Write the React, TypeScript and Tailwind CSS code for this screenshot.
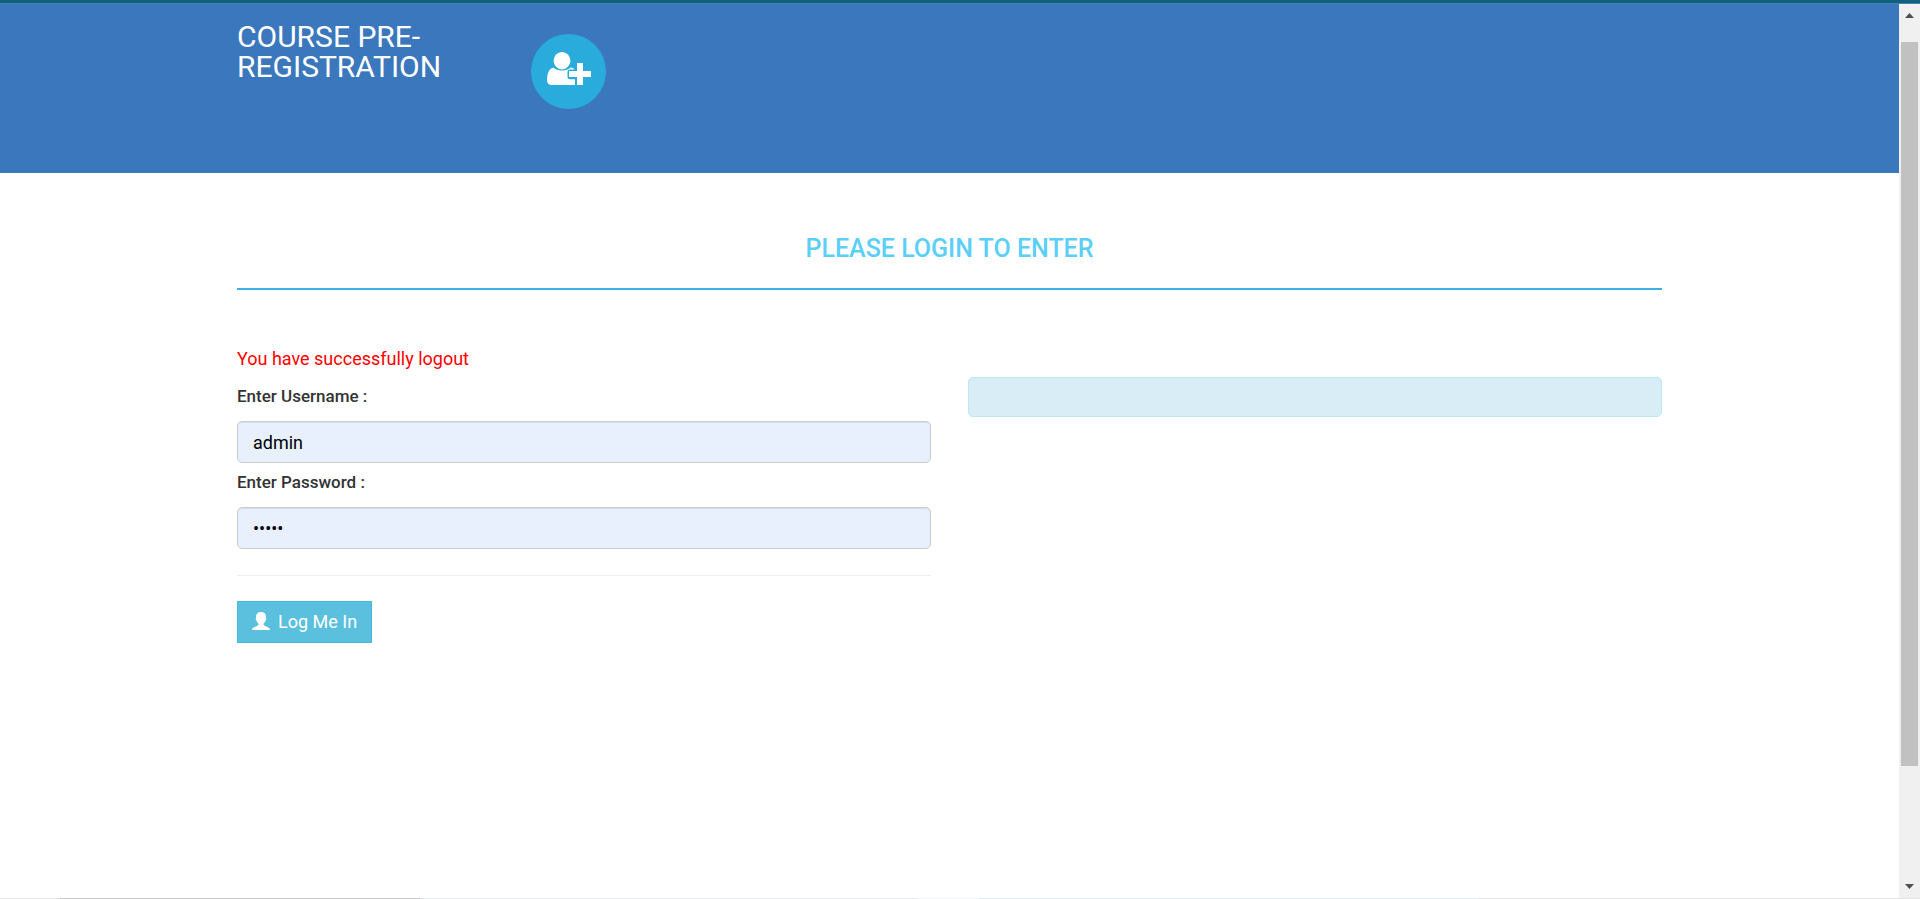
import React from "react";

function UserPlusIcon() {
  return (
    <svg viewBox="0 0 44 33" className="h-[33px] w-11" fill="#fff" aria-hidden="true">
      <ellipse cx="15" cy="8.7" rx="8.4" ry="8.7" />
      <path d="M6.2 15.6C8.4 17.6 11.400 18.600 15 18.600s6.600-1 8.800-3c1.600.3 2.900 1 3.800 2H23a2.500 2.500 0 0 0-2.500 2.500v4.700A2.500 2.500 0 0 0 23 27.300h5V33H4.800C1.700 33 0 31 0 28.200c0-6.200 1.800-11.400 6.200-12.600Z" />
      <path d="M30 11h6v8h8v6h-8v8h-6v-8h-8v-6h8Z" />
    </svg>
  );
}

function UserIcon() {
  return (
    <svg viewBox="0 0 18 18" className="h-[18px] w-[18px]" fill="#fff" aria-hidden="true">
      <path d="M9 0c3.200 0 5 1.900 5 4.800 0 .6-.1 1-.1 1.300.6.400.4 1.900-.4 2.500-.4 1.500-1.200 2.500-2 3.200v.8c0 .5.300.8.800 1l4 1.800c1.100.5 1.700 1.300 1.700 2.600H0c0-1.300.6-2.100 1.700-2.600l4-1.800c.5-.2.800-.5.800-1v-.8c-.8-.7-1.600-1.700-2-3.200-.8-.6-1-2.100-.4-2.500C4.100 5.800 4 5.400 4 4.800 4 1.900 5.800 0 9 0Z" />
    </svg>
  );
}

function Scrollbar() {
  return (
    <div className="flex w-[21px] shrink-0 flex-col items-center bg-[#f0f0f0]" aria-hidden="true">
      <div className="flex h-[38px] items-start pt-[9px]">
        <svg viewBox="0 0 9 5" className="h-[5px] w-[9px]" fill="#505050">
          <path d="M4.500 0 9 5H0Z" />
        </svg>
      </div>
      <div className="w-[17px] grow-[724] basis-0 bg-[#c1c1c1]" />
      <div className="flex grow-[132] basis-0 items-end">
        <svg viewBox="0 0 9 14" className="h-[14px] w-[9px]" fill="#505050">
          <path d="M0 0h9L4.500 5Z" />
        </svg>
      </div>
    </div>
  );
}

const fieldClass =
  "mt-[13px] block h-[42px] w-full rounded-[5px] border border-[#ccc] bg-[#e8f0fe] px-[15px] text-[18px] text-black shadow-[inset_0_1px_1px_rgba(0,0,0,0.075)] outline-none";
const labelClass = "block text-[17px] leading-6 font-medium text-[#333]";

export default function App() {
  return (
    <div className="flex min-h-screen flex-col bg-white font-['Roboto',sans-serif] text-[#333]">
      <div className="h-[3px] bg-[#10607f]" />
      <div className="h-px bg-[#3b87a8]" />
      <div className="flex grow">
        <div className="min-w-0 grow">
          <header className="h-[169px] bg-[#3b77bc]">
            <div className="mx-auto flex max-w-[1425px] items-start gap-[74px]">
              <a href="#" className="mt-[18px] w-[220px] text-[30px] leading-[30px] text-white">
                COURSE PRE-REGISTRATION
              </a>
              <div className="mt-[30px] flex h-[75px] w-[75px] items-center justify-center rounded-full bg-[#29abdc] pb-[6px]">
                <UserPlusIcon />
              </div>
            </div>
          </header>
          <main className="mx-auto max-w-[1425px] pt-[61px]">
            <h4 className="border-b-2 border-[#3db0e8] pb-6 text-center text-[25px] leading-[30px] font-medium text-[#5bcff7]">
              PLEASE LOGIN TO ENTER
            </h4>
            <div className="grid grid-cols-2 gap-[37px] pt-[57px]">
              <form onSubmit={(e) => e.preventDefault()}>
                <p className="text-[18px] leading-6 text-[#f00]">You have successfully logout</p>
                <label htmlFor="username" className={labelClass + " mt-[13px]"}>
                  Enter Username :
                </label>
                <input id="username" type="text" defaultValue="admin" className={fieldClass} />
                <label htmlFor="password" className={labelClass + " mt-[7px]"}>
                  Enter Password :
                </label>
                <input id="password" type="password" defaultValue="admin" className={fieldClass} />
                <hr className="mt-[26px] mb-[25px] border-[#eee]" />
                <button
                  type="submit"
                  className="flex h-[42px] items-center gap-2 border border-[#46b8da] bg-[#5bc0de] px-[14px] pb-[2px] text-[18px] text-white"
                >
                  <UserIcon />
                  Log Me In
                </button>
              </form>
              <div className="mt-[30px] h-10 rounded-[5px] border border-[#bce8f1] bg-[#d9edf7]" />
            </div>
          </main>
        </div>
        <Scrollbar />
      </div>
      <div className="flex h-px bg-[#e3e3e3]">
        <div className="w-[60px] bg-[#e6e6e6]" />
        <div className="w-[360px] bg-[#c9c9c9]" />
        <div className="w-[498px] bg-[#e6e8ea]" />
        <div className="w-[61px] bg-[#f5f7f8]" />
        <div className="w-[500px] bg-[#dfe9f0]" />
      </div>
    </div>
  );
}
